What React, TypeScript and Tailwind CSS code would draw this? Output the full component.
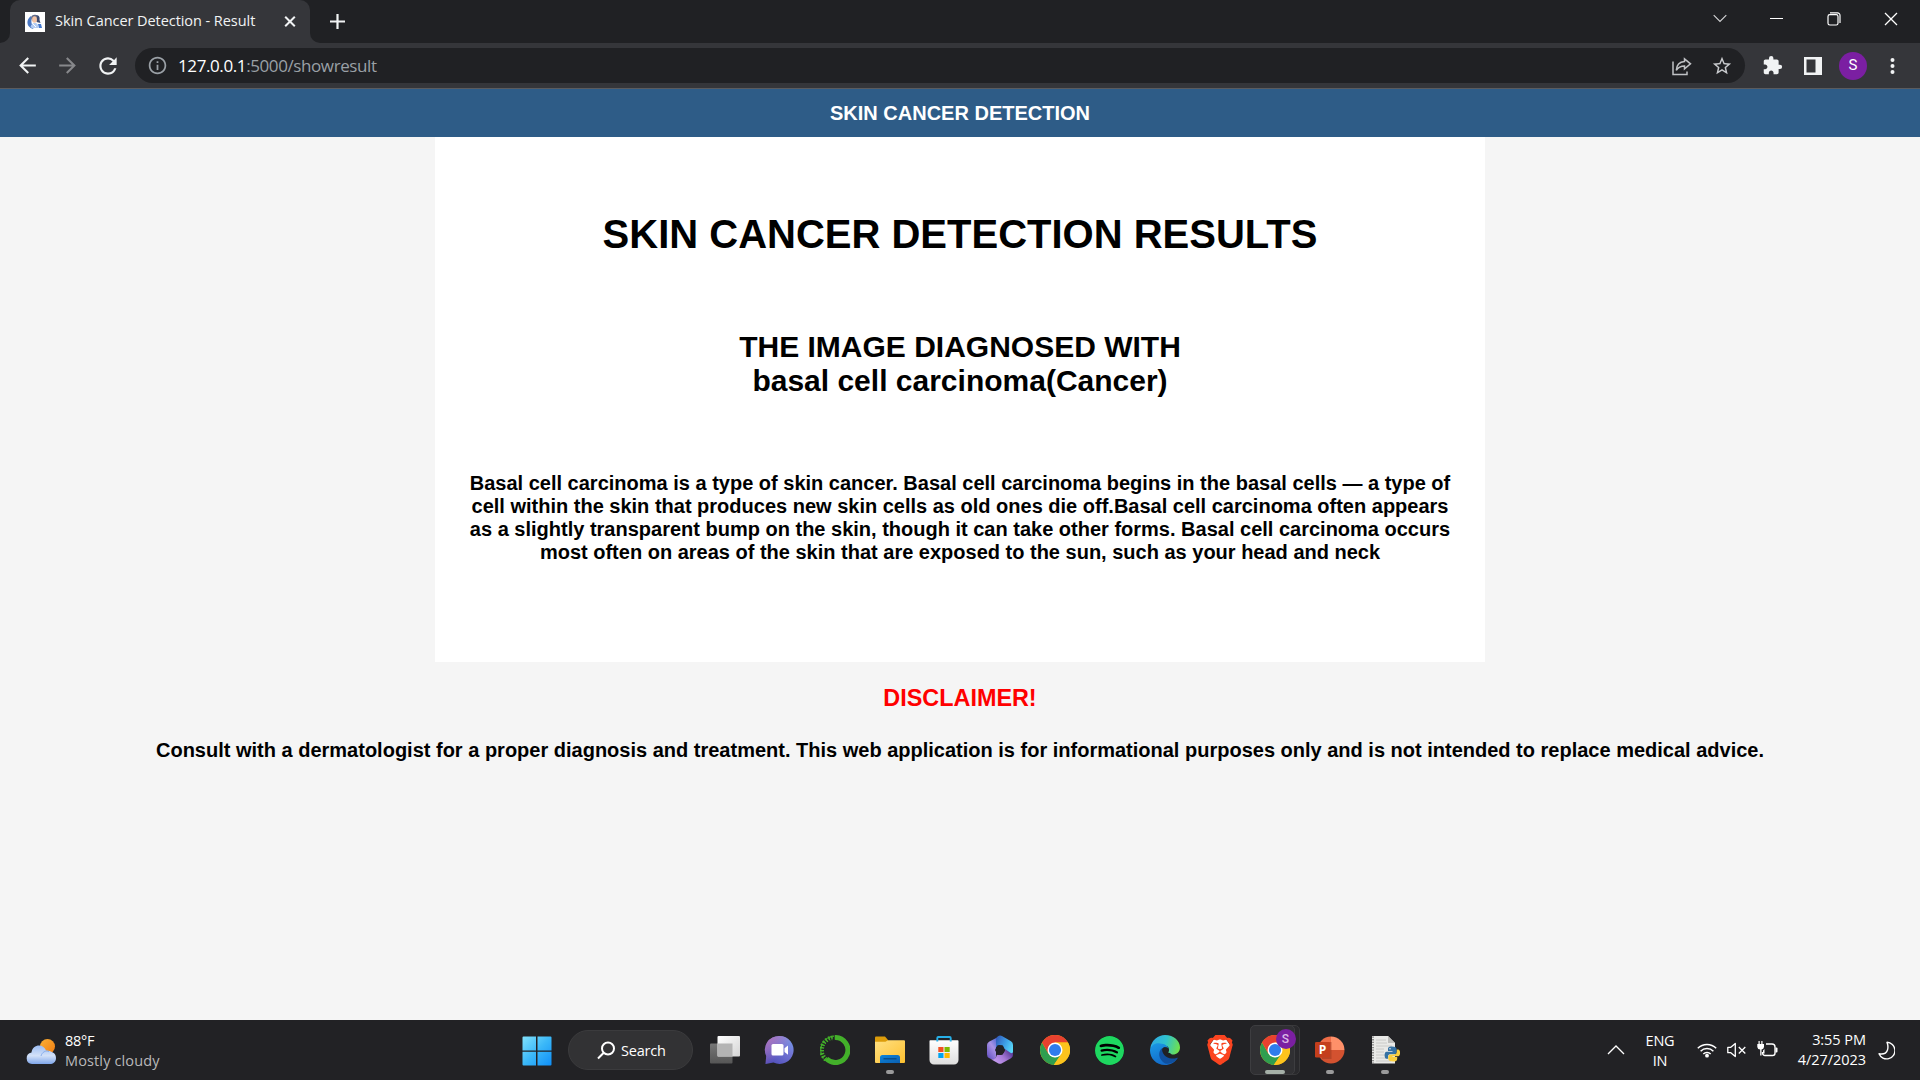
import React from "react";
import { MdExtension, MdInfoOutline, MdStarBorder, MdRefresh, MdArrowBack, MdArrowForward } from "react-icons/md";
import { SiSpotify, SiBrave } from "react-icons/si";

const ui = "font-['Open_Sans','Noto_Sans',sans-serif]";

function Favicon() {
  return (
    <svg width="20" height="20" viewBox="0 0 20 20" className="shrink-0">
      <rect width="20" height="20" fill="#fff" />
      <path d="M6 4C2.500 6.500 1.500 10.500 3.500 14c1.500 2 4 3 5 2.500L6.500 11z" fill="#4a78c4" />
      <path d="M11 3c3.500 0 4 3 3.500 5l1 3-4-1z" fill="#3b4a70" />
      <path d="M6 6c0-3 5-4.500 6.500-1.500L10 6 7 9z" fill="#5f6a88" />
      <ellipse cx="9.500" cy="7.500" rx="2.400" ry="3.200" fill="#f3c3a4" />
      <path d="M5.500 15c1-3 2-4 4-4 3 0 4 2 4 5H7z" fill="#b3ccf3" />
      <path d="M13 12h3l1 4h-3z" fill="#4378cf" />
      <path d="M7.500 11.500l3.500 3.500" stroke="#fff" />
    </svg>
  );
}

function TabStrip() {
  return (
    <div className="flex h-[43px] bg-[#202124]">
      <div className="w-[10px] bg-[#35363a]">
        <div className="h-[43px] w-[10px] rounded-br-[10px] bg-[#202124]" />
      </div>
      <div className="flex h-[43px] w-[300px] items-center rounded-t-[10px] bg-[#35363a] pl-[15px]">
        <Favicon />
        <span className={`${ui} -mt-[2px] ml-[10px] w-[225px] shrink-0 whitespace-nowrap text-[14.500px] leading-5 tracking-[-0.060px] text-[#f1f3f4]`}>
          Skin Cancer Detection - Result
        </span>
        <svg width="20" height="20" viewBox="0 0 20 20" className="shrink-0">
          <path d="M5.200 4.700l9.600 9.600M14.800 4.700l-9.600 9.600" stroke="#f1f3f4" strokeWidth="2" />
        </svg>
      </div>
      <div className="h-[43px] w-[10px] bg-[#35363a]">
        <div className="h-[43px] w-[10px] rounded-bl-[10px] bg-[#202124]" />
      </div>
      <svg width="16" height="16" viewBox="0 0 16 16" className="ml-[10px] mt-[13px]">
        <path d="M7.500 1v15M0 8.500h15" stroke="#f1f3f4" strokeWidth="2.200" />
      </svg>
      <div className="mr-[1px] ml-auto flex h-[37px] items-center text-white">
        <div className="flex w-[57px] justify-center">
          <svg width="14" height="9" viewBox="0 0 14 9">
            <path d="M.700 1.200l6.300 6.300 6.300-6.300" fill="none" stroke="#d5d6d8" strokeWidth="1.100" />
          </svg>
        </div>
        <div className="flex w-[57px] justify-center">
          <div className="h-px w-[13px] bg-white" />
        </div>
        <div className="flex w-[57px] justify-center">
          <svg width="14" height="14" viewBox="0 0 14 14" fill="none" stroke="#fff" strokeWidth="1.200">
            <rect x="1" y="2.600" width="10" height="10.400" rx="1.800" />
            <path d="M3 .900h7.500a2.500 2.500 0 0 1 2.500 2.500V11" />
          </svg>
        </div>
        <div className="flex w-[57px] justify-center">
          <svg width="14" height="14" viewBox="0 0 14 14">
            <path d="M1 1l12 12M13 1L1 13" stroke="#fff" strokeWidth="1.300" />
          </svg>
        </div>
      </div>
    </div>
  );
}

function Toolbar() {
  return (
    <div className="flex h-[46px] items-center border-b border-[#5b5c5f] bg-[#35363a] pl-[7px]">
      <div className="flex w-10 justify-center"><MdArrowBack size={25} color="#f1f3f4" /></div>
      <div className="flex w-10 justify-center"><MdArrowForward size={25} color="#87888b" /></div>
      <div className="flex w-10 justify-center pl-[1px]"><MdRefresh size={26} color="#f1f3f4" /></div>
      <div className="ml-2 flex h-[35px] w-[1610px] items-center rounded-full bg-[#202124] pl-[12px]">
        <MdInfoOutline size={21} color="#9aa0a6" />
        <span className={`${ui} ml-[10px] whitespace-nowrap text-[17px] leading-6 tracking-[-0.400px] text-[#9aa0a6]`}>
          <span className="text-white">127.0.0.1</span>:5000/showresult
        </span>
        <svg width="20" height="19" viewBox="0 0 20 19" fill="none" stroke="#c0c2c5" strokeWidth="1.500" className="ml-auto mr-[19px] mt-px">
          <path d="M1 4.500V17.500H15V14.500" />
          <path d="M12.500 1.800l6 5-6 5V9C8.500 9 6 10.500 4.300 13.300 4.600 8 8 5 12.500 4.600z" />
        </svg>
        <MdStarBorder size={22} color="#c9cbce" className="mr-[12px]" />
      </div>
      <div className="ml-2 flex w-10 justify-center pr-[2px]"><MdExtension size={21} color="#f1f3f4" /></div>
      <div className="flex w-10 justify-center">
        <svg width="18" height="18" viewBox="0 0 18 18">
          <path fillRule="evenodd" d="M0 0h18v18H0zM2.500 2.500v13H11.500v-13z" fill="#f1f3f4" />
        </svg>
      </div>
      <div className="flex w-10 justify-center">
        <div className="flex size-7 items-center justify-center rounded-full bg-[#7b1fa2] font-[Roboto,sans-serif] text-[15px] text-white">S</div>
      </div>
      <div className="flex w-10 justify-center">
        <svg width="6" height="18" viewBox="0 0 6 18" fill="#f1f3f4">
          <circle cx="2.500" cy="3" r="2" /><circle cx="2.500" cy="9" r="2" /><circle cx="2.500" cy="15" r="2" />
        </svg>
      </div>
    </div>
  );
}

function Page() {
  return (
    <div className="flex h-[931px] flex-col items-center bg-[#f5f5f5] text-center font-['Liberation_Sans',Arial,sans-serif] font-bold text-black">
      <header className="flex h-12 w-full shrink-0 items-center justify-center bg-[#2e5c87] text-[20px] leading-6 text-white">
        SKIN CANCER DETECTION
      </header>
      <main className="h-[525px] w-[1050px] shrink-0 bg-white pt-[74px]">
        <h1 className="text-[40px] leading-[46px]">SKIN CANCER DETECTION RESULTS</h1>
        <h2 className="mt-[73px] text-[30px] leading-[34px]">
          THE IMAGE DIAGNOSED WITH
          <br />
          basal cell carcinoma(Cancer)
        </h2>
        <p className="mt-[74px] whitespace-nowrap text-[20px] leading-[23px]">
          Basal cell carcinoma is a type of skin cancer. Basal cell carcinoma begins in the basal cells — a type of
          <br />
          cell within the skin that produces new skin cells as old ones die off.Basal cell carcinoma often appears
          <br />
          as a slightly transparent bump on the skin, though it can take other forms. Basal cell carcinoma occurs
          <br />
          most often on areas of the skin that are exposed to the sun, such as your head and neck
        </p>
      </main>
      <h3 className="mt-[23px] text-[23.400px] leading-[27px] text-[#ff0000]">DISCLAIMER!</h3>
      <p className="mt-[27px] whitespace-nowrap text-[20px] leading-[23px]">
        Consult with a dermatologist for a proper diagnosis and treatment. This web application is for informational
        purposes only and is not intended to replace medical advice.
      </p>
    </div>
  );
}

function Weather() {
  return (
    <svg width="30" height="26" viewBox="0 0 30 26">
      <defs>
        <linearGradient id="sun" x1="0" y1="0" x2="1" y2="1"><stop offset="0" stopColor="#fbb034" /><stop offset="1" stopColor="#f07c12" /></linearGradient>
        <linearGradient id="cloud" x1="0" y1="0" x2="0" y2="1"><stop offset="0" stopColor="#9cbdf2" /><stop offset=".55" stopColor="#d3e1f8" /><stop offset="1" stopColor="#7fa6ea" /></linearGradient>
      </defs>
      <circle cx="21.500" cy="7.500" r="7.500" fill="url(#sun)" />
      <path d="M6 25a5.800 5.800 0 0 1-.5-11.500C6 9 9.500 6.500 13 6.500c3.500 0 6 2 7 5 5 .500 10 2 10 7.500 0 4-3 6-6 6z" fill="url(#cloud)" />
      <path d="M15 17c1-4 5-6 8-4.500" stroke="#86aceb" fill="none" />
    </svg>
  );
}

function StartIcon() {
  return (
    <svg width="30" height="30" viewBox="0 0 30 30">
      <defs><linearGradient id="win" x1="0" y1="0" x2="30" y2="30" gradientUnits="userSpaceOnUse"><stop offset="0" stopColor="#84e3fb" /><stop offset=".5" stopColor="#3bb8f8" /><stop offset="1" stopColor="#0d8df8" /></linearGradient></defs>
      <path d="M.500 1.500a1 1 0 0 1 1-1H14v14H.500zM15.500.500h13a1 1 0 0 1 1 1v13h-14zM.500 15.800H14v13.700H1.500a1 1 0 0 1-1-1zM15.500 15.800h14v12.700a1 1 0 0 1-1 1h-13z" fill="url(#win)" />
    </svg>
  );
}

function TaskViewIcon() {
  return (
    <svg width="30" height="28" viewBox="0 0 30 28">
      <defs><linearGradient id="tv" x1="0" y1="0" x2="1" y2="1"><stop offset="0" stopColor="#fff" /><stop offset="1" stopColor="#d4d4d4" /></linearGradient>
        <linearGradient id="tv2" x1="0" y1="0" x2="0" y2="1"><stop offset="0" stopColor="#777" /><stop offset="1" stopColor="#565656" /></linearGradient></defs>
      <rect x="0" y="7.500" width="22.500" height="20" rx="1" fill="url(#tv2)" />
      <rect x="7.500" y="0" width="22.500" height="20.500" rx="1" fill="url(#tv)" />
      <rect x="7.500" y="7.500" width="15" height="13" fill="#b4b4b4" />
    </svg>
  );
}

function ChatIcon() {
  return (
    <svg width="30" height="30" viewBox="0 0 30 30" className="mr-[2px]">
      <defs><linearGradient id="chat" x1="1" y1="0" x2=".3" y2="1"><stop offset="0" stopColor="#74a2ef" /><stop offset=".45" stopColor="#7377d6" /><stop offset="1" stopColor="#5250bb" /></linearGradient>
        <linearGradient id="chat2" x1="0" y1="0" x2=".6" y2=".6"><stop offset="0" stopColor="#b873b8" /><stop offset="1" stopColor="#b873b8" stopOpacity="0" /></linearGradient></defs>
      <path d="M15.500 1a14 14 0 1 1-6 26.600L1.500 29l.700-8A14 14 0 0 1 15.500 1z" fill="url(#chat)" />
      <path d="M15.500 1a14 14 0 1 1-6 26.600L1.500 29l.700-8A14 14 0 0 1 15.500 1z" fill="url(#chat2)" />
      <rect x="7.500" y="9" width="12" height="11.500" rx="1.500" fill="#fff" />
      <path d="M20.500 13.200l3.500-2.800v9.300l-3.500-2.800z" fill="#fff" />
    </svg>
  );
}

function AnacondaIcon() {
  return (
    <svg width="30" height="30" viewBox="0 0 30 30" fill="none" stroke="#43b02a">
      <path d="M15 2.500A12.500 12.500 0 1 1 6.500 23.800" strokeWidth="5" />
      <path d="M6 24.500A12.500 12.500 0 0 1 14.500 2.600" strokeWidth="4.500" strokeDasharray="1.600 1.400" />
      <path d="M3.500 23.500A14 14 0 0 1 14 1.200" strokeWidth="1.200" strokeDasharray="3 1" />
      <path d="M7 22A11 11 0 0 1 13 4.200" strokeWidth="1" stroke="#202124" strokeDasharray="2 1.500" />
    </svg>
  );
}

function FolderIcon() {
  return (
    <svg width="30" height="28" viewBox="0 0 30 28">
      <defs><linearGradient id="fold" x1="0" y1="0" x2="1" y2="1"><stop offset="0" stopColor="#ffe082" /><stop offset="1" stopColor="#fdc02f" /></linearGradient>
        <linearGradient id="foldb" x1="0" y1="0" x2="1" y2="1"><stop offset="0" stopColor="#0a84dc" /><stop offset="1" stopColor="#0c5fb0" /></linearGradient></defs>
      <path d="M0 1.500Q0 .500 1 .500H10l3 3.500v4H0z" fill="#dc9c0a" />
      <path d="M0 5.800h10.500l2.500-1.600h16a1 1 0 0 1 1 1V26a1 1 0 0 1-1 1H1a1 1 0 0 1-1-1z" fill="url(#fold)" />
      <path d="M5 27v-5.500a2.500 2.500 0 0 1 2.500-2.500h15A2.500 2.500 0 0 1 25 21.500V27z" fill="url(#foldb)" />
      <path d="M8.500 22.800h13" stroke="#06457f" strokeWidth="1.200" />
    </svg>
  );
}

function StoreIcon() {
  return (
    <svg width="30" height="30" viewBox="0 0 30 30" className="mr-px">
      <defs><linearGradient id="store" x1="0" y1="0" x2="0" y2="1"><stop offset="0" stopColor="#fff" /><stop offset="1" stopColor="#dedede" /></linearGradient></defs>
      <path d="M.500 6a.800.800 0 0 1 .8-.800h27.400a.800.800 0 0 1 .8.800v19a4.500 4.500 0 0 1-4.500 4.500H5A4.500 4.500 0 0 1 .500 25z" fill="url(#store)" />
      <path d="M8.300 6.500V3A1 1 0 0 1 9.300 2h11.400a1 1 0 0 1 1 1v3.500" fill="none" stroke="#27b0e8" strokeWidth="1.900" />
      <path d="M9.300 12h5.200v5H9.300z" fill="#f25022" /><path d="M15.500 12h5.200v5h-5.200z" fill="#7fba00" />
      <path d="M9.300 18h5.200v5H9.300z" fill="#00a4ef" /><path d="M15.500 18h5.200v5h-5.200z" fill="#ffb900" />
    </svg>
  );
}

function OfficeIcon() {
  return (
    <svg width="28" height="30" viewBox="0 0 28 30">
      <defs>
        <linearGradient id="of1" x1=".8" y1="0" x2="0" y2="1"><stop offset="0" stopColor="#3a5fd0" /><stop offset=".45" stopColor="#a993e6" /><stop offset="1" stopColor="#5c48bd" /></linearGradient>
        <linearGradient id="of2" x1="0" y1=".1" x2="1" y2=".6"><stop offset="0" stopColor="#3057b8" /><stop offset=".55" stopColor="#3d9fe6" /><stop offset="1" stopColor="#58d7f8" /></linearGradient>
        <linearGradient id="of3" x1="0" y1=".8" x2="1" y2=".2"><stop offset="0" stopColor="#c9a2f3" /><stop offset=".5" stopColor="#a77ad8" /><stop offset="1" stopColor="#4c2f8c" /></linearGradient>
      </defs>
      <path d="M14 1L3 6.800Q1 8 1 10v9.500Q1 22 3 23l2.500 1.300Q9 26 10 22V11z" fill="url(#of1)" />
      <path d="M10 12.500V5q0-3 3-4.200 1.500-.500 3 .300L25 6.300Q27 7.500 27 10v9q-1 2-3 0l-5.500-4-1.500-4-4-1z" fill="url(#of2)" />
      <path d="M27 17v3q0 2-2 3.200l-9 5q-2 1-4 0l-7-4q3.500 1 5-2l1-2.500 4 .300 3-2.500 1-3.500 5 3.500q2.500 1.500 3-.500z" fill="url(#of3)" />
      <path d="M11.500 10.300h5l2.700 4.700-2.700 4.700h-5L9 15z" fill="#222226" />
    </svg>
  );
}

function ChromeIcon() {
  return (
    <svg width="30" height="30" viewBox="0 0 48 48">
      <circle cx="24" cy="24" r="24" fill="#fbbc05" />
      <path d="M3.200 12A24 24 0 0 0 22 47.900L34.400 30 24 36 13.600 30z" fill="#2f9e4f" />
      <path d="M3.200 12A24 24 0 0 1 44.800 12H24L13.600 30z" fill="#e8412f" />
      <path d="M24 12h20.800A24 24 0 0 1 22 47.900L34.400 30z" fill="#fcc31d" />
      <circle cx="24" cy="24" r="12" fill="#fff" />
      <circle cx="24" cy="24" r="9.700" fill="#2f7cec" />
    </svg>
  );
}

function EdgeIcon() {
  return (
    <svg width="30" height="30" viewBox="0 0 30 30">
      <defs>
        <linearGradient id="ed1" x1="0" y1=".3" x2="1" y2=".5"><stop offset="0" stopColor="#2fa9e4" /><stop offset=".5" stopColor="#2fc2cf" /><stop offset="1" stopColor="#6fe04e" /></linearGradient>
        <linearGradient id="ed2" x1="0" y1="0" x2=".5" y2="1"><stop offset="0" stopColor="#1a9ae6" /><stop offset="1" stopColor="#1369c8" /></linearGradient>
      </defs>
      <path d="M.500 12A15 15 0 0 1 15 0c9 0 15 6 15 12.500 0 4.500-3.500 7-7 7-3.500 0-5.500-1.500-4.500-3 1.500-2 0-6-4-6-5 0-12 1-14 6z" fill="url(#ed1)" />
      <path d="M0 15.500C1 9.500 6 7.500 10 8.500c5 0 8.500 3 8.500 6.200-1-2-3-2.700-5-2.200-3 1.500-4 6 0 10 3 2.500 9 3 14 .500C25 27.500 20 30 15 30 6 30 0 23 0 15.500z" fill="url(#ed2)" />
      <path d="M12.300 13c-5 3.500-4 12 3 15.500 5 1 9.500-1.500 12.500-5.500-.500-.700-1.500 1-6 .500-6-.500-10.500-5-9.500-10.500z" fill="#104f9d" />
      <circle cx="15.700" cy="15.300" r="3" fill="#202124" />
      <path d="M13 17c1 3 5 5 10 4l-3-3z" fill="#202124" />
    </svg>
  );
}

function BraveIcon() {
  return (
    <div className="relative flex">
      <svg width="30" height="30" viewBox="0 0 30 30" className="absolute inset-0">
        <path d="M9 4h12l4 6-3 10-7 6-7-6-3-10z" fill="#fff" />
      </svg>
      <SiBrave size={30} color="#fb4420" className="relative" />
    </div>
  );
}

function PowerPointIcon() {
  return (
    <svg width="30" height="30" viewBox="0 0 30 30">
      <path d="M16 1.500a13.500 13.500 0 0 0-13.500 14L16 17z" fill="#ed6c47" />
      <path d="M16 1.500A13.500 13.500 0 0 1 29.500 15L16 17z" fill="#ff9069" />
      <path d="M2.500 15h27a13.500 13.500 0 0 1-27 0z" fill="#d35230" />
      <path d="M7 7h9.500v17H7z" fill="#9e3a20" opacity=".55" />
      <rect x="0" y="7" width="15" height="15.500" rx="1.300" fill="#c43e1c" />
      <text x="7.500" y="19" textAnchor="middle" fontFamily="Open Sans" fontWeight="700" fontSize="12" fill="#fff">P</text>
    </svg>
  );
}

function PythonFileIcon() {
  return (
    <svg width="30" height="30" viewBox="0 0 30 30">
      <path d="M2 1h16l7 7v20.500H2z" fill="#e9e9e7" />
      <path d="M18 1v7h7z" fill="#bdbdbb" />
      <path d="M6 5h10M6 8h11M6 11h16M6 14h8M6 17h8M6 20h12M6 23h14M6 26h15" stroke="#c6c6c4" strokeWidth=".9" />
      <path d="M3 1.500v27" stroke="#6d6d6d" strokeWidth="1.500" strokeDasharray="1.300 1.300" />
      <path d="M22 11.500c-4 0-4 1.500-4 3v1.500h4.500v.800h-6c-2.500 0-2.500 7 0 7H18v-2c0-2 1-2.500 3-2.500h3.500c1.500 0 2.200-1 2.200-2.500v-2.300c0-2-1.500-3-4.700-3z" fill="#3571a3" />
      <path d="M23 26.500c4 0 4.200-1.500 4.200-3V22h-4.700v-.800h5.700c2.500 0 2.500-6.700 0-6.700h-1.400v2c0 2-1 3-3 3h-3.300c-1.500 0-2.200 1-2.200 2.300v2c0 2 1.500 2.700 4.700 2.700z" fill="#fbcf3f" />
      <circle cx="20" cy="13.700" r=".7" fill="#fff" />
    </svg>
  );
}

function Task({ children, mark = false }: { children: React.ReactNode; mark?: boolean }) {
  return (
    <div className="relative flex h-[60px] w-[55px] items-center justify-center">
      {children}
      {mark && <div className="absolute bottom-[6px] left-[23.500px] h-1 w-2 rounded-full bg-[#9a9a9b]" />}
    </div>
  );
}

function Taskbar() {
  return (
    <div className={`${ui} flex h-[60px] items-center bg-[#222225] text-[14.500px] leading-5 text-white`}>
      <div className="flex w-[509px] items-center pl-[26px]">
        <div className="mt-[3px]"><Weather /></div>
        <div className="ml-[9px] mt-[2px] tracking-[-0.250px]">
          <div>88°F</div>
          <div className="tracking-[0.130px] text-[#b9b9ba]">Mostly cloudy</div>
        </div>
      </div>
      <div className="flex w-[55px] justify-center pt-[2px]"><StartIcon /></div>
      <div className="ml-[4px] mr-[4px] flex h-10 w-[125px] items-center rounded-full border border-[#3b3b3d] bg-[#323234] pl-[28px]">
        <svg width="19" height="19" viewBox="0 0 19 19" fill="none" stroke="#fff" strokeWidth="2">
          <circle cx="11" cy="7.500" r="6" /><path d="M6.700 11.800L1 17.500" />
        </svg>
        <span className="ml-[5px] mt-px tracking-[-0.200px]">Search</span>
      </div>
      <Task><TaskViewIcon /></Task>
      <Task><ChatIcon /></Task>
      <Task><AnacondaIcon /></Task>
      <Task mark><FolderIcon /></Task>
      <Task><StoreIcon /></Task>
      <Task><OfficeIcon /></Task>
      <Task><ChromeIcon /></Task>
      <Task><div className="flex rounded-full bg-black"><SiSpotify size={29} color="#1ed760" /></div></Task>
      <Task><EdgeIcon /></Task>
      <Task><BraveIcon /></Task>
      <div className="relative flex h-[60px] w-[55px] items-center justify-center">
        <div className="absolute left-[8px] top-[5px] h-[50px] w-[45px] rounded-[5px] border border-[#39393b] bg-[#29292c]" />
        <div className="absolute left-[2.500px] top-[5px] h-[50px] w-[45px] rounded-[5px] border border-[#3d3d40] bg-[#303033]" />
        <div className="relative"><ChromeIcon /></div>
        <div className="absolute left-[28.500px] top-[9px] flex size-5 items-center justify-center rounded-full bg-[#7b1fa2] font-[Roboto,sans-serif] text-[12px] font-medium text-[#d9b8e6]">S</div>
        <div className="absolute bottom-[6px] left-[17.500px] h-1 w-5 rounded-full bg-[#a5b0a8]" />
      </div>
      <Task mark><PowerPointIcon /></Task>
      <Task mark><PythonFileIcon /></Task>
      <div className="ml-auto flex items-center">
        <svg width="18" height="10" viewBox="0 0 18 10" className="mr-[20px]">
          <path d="M1 9l8-8 8 8" fill="none" stroke="#fff" strokeWidth="1.300" />
        </svg>
        <div className="mt-[2px] w-[30px] text-center tracking-[-0.200px]">
          <div>ENG</div>
          <div>IN</div>
        </div>
        <svg width="20" height="16" viewBox="0 0 20 16" fill="none" stroke="#fff" strokeWidth="1.500" className="ml-[22px]">
          <path d="M.800 6.300a13 13 0 0 1 18.400 0M3.600 9.200a9 9 0 0 1 12.800 0M6.300 12a5.200 5.200 0 0 1 7.400 0" />
          <circle cx="10" cy="13.700" r="1.900" fill="#fff" stroke="none" />
        </svg>
        <svg width="20" height="16" viewBox="0 0 20 16" fill="none" stroke="#fff" strokeWidth="1.300" className="ml-[10px]">
          <path d="M.800 5.300h3L8.300 1.500v13L3.800 10.700h-3z" strokeLinejoin="round" />
          <path d="M11.800 5l6.500 6.500M18.300 5l-6.500 6.500" />
        </svg>
        <svg width="21" height="18" viewBox="0 0 21 18" className="ml-[10px] -mt-[2px]">
          <path d="M9 4h6a3 3 0 0 1 3 3v6a2.500 2.500 0 0 1-2.500 2.500H8A2.500 2.500 0 0 1 5.500 13v-1" fill="none" stroke="#fff" strokeWidth="1.400" />
          <path d="M18.500 7.500h1a1 1 0 0 1 1 1v3a1 1 0 0 1-1 1h-1z" fill="#fff" />
          <path d="M1.500 1h1.200v3h1.600V1h1.200v3H7v3a3 3 0 0 1-2.500 2.500V15.500H3.200V9.600A3 3 0 0 1 .300 7V4h1.200zM7.500 9v4.500H6v-3z" fill="#fff" />
        </svg>
        <div className="w-[88px] text-right tracking-[-0.050px]">
          <div>3:55 PM</div>
          <div>4/27/2023</div>
        </div>
        <svg width="17" height="19" viewBox="0 0 17 19" className="ml-[12px] mr-[25px]">
          <path d="M9 1.300a8.300 8.300 0 1 1-8 11.500C5 13.500 8.500 12 9.500 9c.800-2.500.500-5-.500-7.700z" fill="none" stroke="#fff" strokeWidth="1.400" strokeLinejoin="round" />
        </svg>
      </div>
    </div>
  );
}

export default function App() {
  return (
    <div className="flex h-[1080px] w-[1920px] flex-col overflow-hidden">
      <TabStrip />
      <Toolbar />
      <Page />
      <Taskbar />
    </div>
  );
}
